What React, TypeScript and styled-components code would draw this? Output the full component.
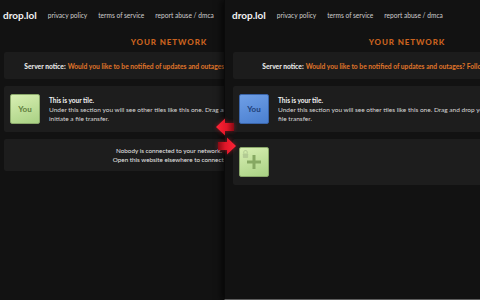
import React from "react";
import styled, { createGlobalStyle } from "styled-components";

const GlobalStyle = createGlobalStyle`
  html, body {
    margin: 0;
    padding: 0;
    background: #121212;
  }
  body {
    font-family: Lato, "Open Sans", sans-serif;
    color: #e4e4e4;
  }
`;

const NOTICE = "Would you like to be notified of updates and outages? Follow @drop_lol on Twitter!";
const TILE_TEXT =
  "Under this section you will see other tiles like this one. Drag and drop your files onto a tile to initiate a file transfer.";

interface PageProps {
  you: "green" | "blue";
  connected?: boolean;
}

const NetworkPage = ({ you, connected }: PageProps) => {
  // Main return
  return (
    <>
      <Header>
        <Logo>drop.lol</Logo>
        <NavLink>privacy policy</NavLink>
        <NavLink>terms of service</NavLink>
        <NavLink>report abuse / dmca</NavLink>
      </Header>
      <Heading>YOUR NETWORK</Heading>
      <Notice>
        <strong>Server notice: </strong>
        <Orange>{NOTICE}</Orange>
      </Notice>
      <Section>
        <Tile $color={you}>You</Tile>
        <TileText>
          <strong>This is your tile.</strong>
          <br />
          {TILE_TEXT}
        </TileText>
      </Section>
      {connected ? (
        <Section>
          <Tile $color="green">
            <Lock viewBox="0 0 8 9">
              <path d="M2 4V2.6a2 2 0 0 1 4 0V4" fill="none" stroke="#b3cb94" strokeWidth="1.2" />
              <rect x="1" y="4" width="6" height="5" rx="0.8" fill="#b3cb94" />
            </Lock>
            <Plus viewBox="0 0 14 14">
              <path d="M5.5 0h3v5.5H14v3H8.5V14h-3V8.5H0v-3h5.5z" fill="#86a862" />
            </Plus>
          </Tile>
        </Section>
      ) : (
        <EmptySection>
          Nobody is connected to your network.
          <br />
          Open this website elsewhere to connect.
        </EmptySection>
      )}
    </>
  );
};

const ArrowLeft = () => (
  <ArrowSvg viewBox="0 0 18 18" $top={118} $left={216}>
    <defs>
      <linearGradient id="al" x1="0" x2="1">
        <stop offset="0" stopColor="#ff2436" />
        <stop offset="0.6" stopColor="#e01628" />
        <stop offset="1" stopColor="#8a0a14" />
      </linearGradient>
    </defs>
    <path d="M0 9L9 0.5V5H18V13H9V17.5Z" fill="url(#al)" />
  </ArrowSvg>
);

const ArrowRight = () => (
  <ArrowSvg viewBox="0 0 18 18" $top={137} $left={218}>
    <defs>
      <linearGradient id="ar" x1="0" x2="1">
        <stop offset="0" stopColor="#8a0a14" />
        <stop offset="0.4" stopColor="#e01628" />
        <stop offset="1" stopColor="#ff2436" />
      </linearGradient>
    </defs>
    <path d="M18 9L9 0.5V5H0V13H9V17.5Z" fill="url(#ar)" />
  </ArrowSvg>
);

const App = () => {
  return (
    <>
      <GlobalStyle />
      <Desktop>
        <Window $width={224}>
          <Page $width={338} $pad={4}>
            <NetworkPage you="green" />
          </Page>
        </Window>
        <Window $width={256} $edge>
          <Page $width={364} $pad={8}>
            <NetworkPage you="blue" connected />
          </Page>
        </Window>
        <ArrowLeft />
        <ArrowRight />
      </Desktop>
    </>
  );
};

export default App;

const Desktop = styled.div`
  position: relative;
  width: 480px;
  height: 300px;
  display: flex;
  overflow: hidden;
  background: #111111;
`;

const Window = styled.div<{ $width: number; $edge?: boolean }>`
  width: ${({ $width }) => $width}px;
  height: 300px;
  flex-shrink: 0;
  overflow: hidden;
  background: #121212;
  box-sizing: border-box;
  ${({ $edge }) =>
    $edge &&
    `
    border-left: 1px solid #0a0a0a;
    border-bottom: 1px solid #5e5e5e;
    box-shadow: -3px 0 6px rgba(0, 0, 0, 0.6);
  `}
`;

const Page = styled.div<{ $width: number; $pad: number }>`
  width: ${({ $width }) => $width}px;
  padding: 0 ${({ $pad }) => $pad}px;
  box-sizing: border-box;
  display: flex;
  flex-direction: column;
  gap: 7px;
`;

const Header = styled.div`
  height: 30px;
  display: flex;
  align-items: center;
  gap: 11px;
`;

const Logo = styled.span`
  font-size: 10px;
  font-weight: 700;
  color: #f2f2f2;
  margin-left: -1px;
`;

const NavLink = styled.span`
  font-size: 6.6px;
  color: #cfcfcf;
`;

const Heading = styled.div`
  height: 12px;
  margin-top: -1px;
  display: flex;
  align-items: center;
  justify-content: center;
  font-size: 8px;
  font-weight: 900;
  letter-spacing: 0.9px;
  color: #c9621f;
`;

const Notice = styled.div`
  height: 27px;
  margin-top: -3px;
  display: flex;
  align-items: center;
  justify-content: center;
  white-space: nowrap;
  background: #1c1c1c;
  border-radius: 2px;
  font-size: 6.7px;
  font-weight: 700;
  color: #e8e8e8;

  strong {
    margin-right: 2px;
  }
`;

const Orange = styled.span`
  color: #e0762a;
`;

const Section = styled.div`
  display: flex;
  align-items: center;
  gap: 9px;
  padding: 8px 6px;
  background: #1d1d1d;
  border-radius: 2px;
`;

const EmptySection = styled.div`
  padding: 7px 6px;
  background: #1d1d1d;
  border-radius: 2px;
  text-align: center;
  font-size: 6.3px;
  line-height: 9px;
  color: #e6e6e6;
  white-space: nowrap;
`;

const Tile = styled.div<{ $color: "green" | "blue" }>`
  position: relative;
  width: 30px;
  height: 30px;
  flex-shrink: 0;
  display: flex;
  align-items: center;
  justify-content: center;
  border-radius: 2px;
  box-sizing: border-box;
  font-size: 8px;
  font-weight: 700;
  background: ${({ $color }) =>
    $color === "green"
      ? "linear-gradient(160deg, #d8efb2, #a9d184)"
      : "linear-gradient(160deg, #6f9fe6, #4a7fd0)"};
  color: ${({ $color }) => ($color === "green" ? "#5e7d3c" : "#1e3f78")};
  border: 1px solid ${({ $color }) => ($color === "green" ? "#8aa86a" : "#3a64a8")};
`;

const Lock = styled.svg`
  position: absolute;
  top: 2px;
  left: 2px;
  width: 7px;
  height: 8px;
`;

const Plus = styled.svg`
  width: 14px;
  height: 14px;
`;

const TileText = styled.div`
  flex: 1;
  font-size: 6.5px;
  line-height: 9px;
  color: #d8d8d8;

  strong {
    color: #f4f4f4;
  }
`;

const ArrowSvg = styled.svg<{ $top: number; $left: number }>`
  position: absolute;
  top: ${({ $top }) => $top}px;
  left: ${({ $left }) => $left}px;
  width: 18px;
  height: 18px;
  filter: drop-shadow(0 0 2px rgba(255, 30, 50, 0.45));
`;
